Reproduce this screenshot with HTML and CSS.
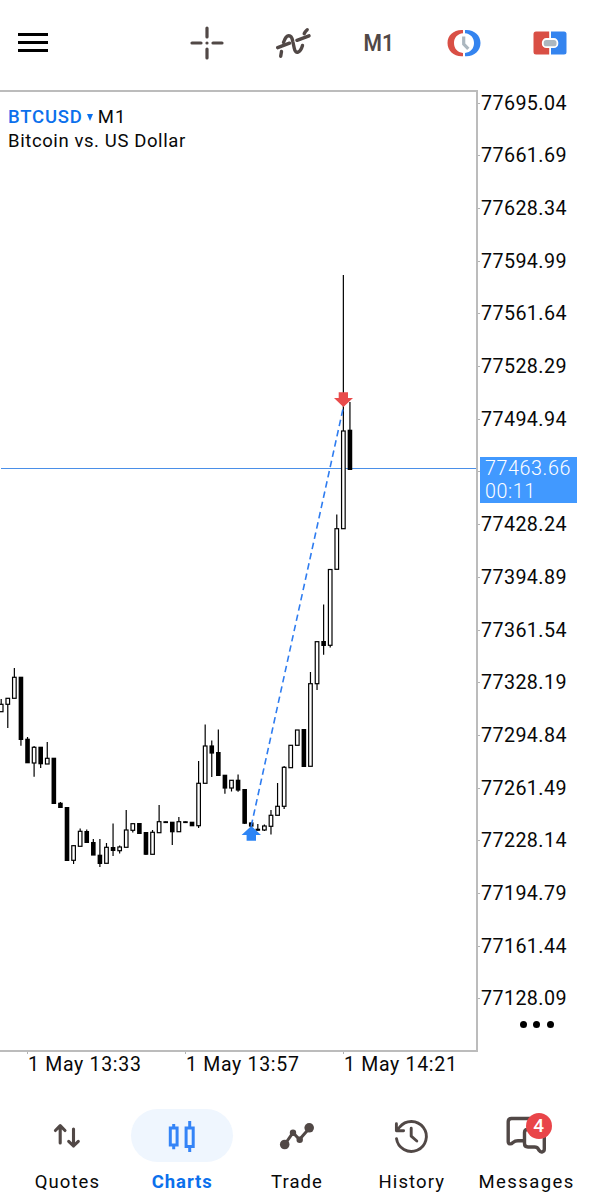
FILE: index.html
```html
<!DOCTYPE html>
<html lang="en">
<head>
    <meta charset="UTF-8">
    <meta name="viewport" content="width=device-width, initial-scale=1.0">
    <title>BTCUSD M1</title>
    <link rel="stylesheet" href="styles.css">
</head>
<body>

<header class="toolbar">
    <button class="menu" aria-label="Menu"><span></span><span></span><span></span></button>
    <div class="tools">
        <button aria-label="Crosshair">
            <svg width="36" height="36" viewBox="0 0 36 36" fill="none" stroke="#514846" stroke-width="3.2" stroke-linecap="round">
                <path d="M18 3v9M18 24v9M3 18h9M24 18h9"/>
                <circle cx="18" cy="18" r="1.6" fill="#514846" stroke="none"/>
            </svg>
        </button>
        <button aria-label="Indicators">
            <svg width="36" height="36" viewBox="0 0 36 36" fill="none" stroke="#514846" stroke-width="3.4" stroke-linecap="round">
                <path d="M5.7 31.2L6.5 26.5M8.5 17.5C11.5 8.5 16.5 9 17.8 16.5L19.2 23C20.5 30 25.3 28 27.5 20.5M29.2 8.8Q30.3 6.3 32.2 4.7"/>
                <path d="M2.7 22.7L14.5 18.2M22 15.3L34 10.8"/>
            </svg>
        </button>
        <button class="timeframe"><span>M1</span></button>
        <button aria-label="One click trading">
            <svg width="36" height="36" viewBox="0 0 36 36">
                <path d="M17 5H15.5C7.5 5 1.5 10.5 1.5 18S7.5 31.3 15.5 31.3H17V28C11.5 27.4 8 23.4 8 18S11.5 8.8 17 8.2Z" fill="#d94f45"/>
                <path d="M19 5H20.5C28.5 5 34.5 10.5 34.5 18S28.5 31.3 20.5 31.3H19V28C24.5 27.4 28 23.4 28 18S24.5 8.8 19 8.2Z" fill="#3484ef"/>
                <path d="M17.7 11.5V19L22.3 23.8" fill="none" stroke="#acb7bf" stroke-width="3.2"/>
            </svg>
        </button>
        <button aria-label="New order">
            <svg width="36" height="36" viewBox="0 0 36 36">
                <path d="M4 6.5H17.2V29.5H4Q1.5 29.5 1.5 27V9Q1.5 6.5 4 6.5Z" fill="#d94f45"/>
                <path d="M19 6.5H32Q34.5 6.5 34.5 9V27Q34.5 29.5 32 29.5H19Z" fill="#3484ef"/>
                <rect x="10.8" y="14" width="14.6" height="8.2" rx="3.5" fill="#acb7bf" stroke="#fff" stroke-width="1.8"/>
            </svg>
        </button>
    </div>
</header>

<main class="chart">
    <section class="plot">
        <svg id="candles" width="476" height="958" viewBox="0 92 476 958"></svg>
        <div class="title">
            <div><b>BTCUSD</b><i class="caret"></i><span class="period">M1</span></div>
            <div class="description">Bitcoin vs. US Dollar</div>
        </div>
    </section>
    <aside class="prices">
        <ul id="prices"></ul>
        <div class="current">77463.66<br>00:11</div>
        <div class="more"><span></span><span></span><span></span></div>
    </aside>
    <div class="times">
        <span>1 May 13:33</span>
        <span>1 May 13:57</span>
        <span>1 May 14:21</span>
    </div>
</main>

<nav class="tabs">
    <a class="tab">
        <span class="icon">
            <svg width="42" height="42" viewBox="0 0 42 42" fill="none" stroke="#514846" stroke-width="3.1" stroke-linecap="round" stroke-linejoin="round">
                <path d="M14.2 28V11M9.4 15.5L14.2 10.7L19 15.5M27.5 14V31M22.7 26.3L27.5 31L32.3 26.3"/>
            </svg>
        </span>
        <span class="label quotes">Quotes</span>
    </a>
    <a class="tab active">
        <span class="icon">
            <svg width="42" height="42" viewBox="0 0 42 42" fill="none" stroke="#3484f7" stroke-width="3">
                <path d="M12.7 9V12.5M12.7 30.5V34.2M28.7 6V12.5M28.7 32V37"/>
                <path d="M9.3 13H16.1V30H9.3ZM25.1 13H32.2V31.5H25.1Z"/>
            </svg>
        </span>
        <span class="label charts">Charts</span>
    </a>
    <a class="tab">
        <span class="icon">
            <svg width="42" height="42" viewBox="0 0 42 42" fill="#514846">
                <path d="M8.7 29.5L17 17.7L23.5 24.5L33.3 13.2" fill="none" stroke="#514846" stroke-width="3"/>
                <circle cx="8.7" cy="29.5" r="4.8"/>
                <circle cx="17" cy="17.7" r="3.2"/>
                <circle cx="23.7" cy="24.7" r="3.2"/>
                <circle cx="33.2" cy="12.8" r="4.8"/>
            </svg>
        </span>
        <span class="label trade">Trade</span>
    </a>
    <a class="tab">
        <span class="icon">
            <svg width="42" height="42" viewBox="0 0 42 42" fill="none" stroke="#514846" stroke-width="2.9" stroke-linecap="round" stroke-linejoin="round">
                <path d="M5.5 23.6A15 15 0 1 0 8.6 12.1L5.5 15.6M5.4 8.7V15.8H12.6"/>
                <path d="M20.2 13.2V21.2L25.8 26"/>
            </svg>
        </span>
        <span class="label history">History</span>
    </a>
    <a class="tab">
        <span class="icon">
            <svg width="42" height="42" viewBox="0 0 42 42" fill="none" stroke="#514846" stroke-width="3.4" stroke-linecap="round" stroke-linejoin="round">
                <path d="M24 3.5H5.5Q2.2 3.5 2.2 6.8V26.5C2.2 29.5 5 29.5 7 27.5Q9 25.7 12 25.7H17"/>
                <path d="M26 14.5H21.5Q18.5 14.5 18.5 17.5V28.5Q18.5 32 22 32H28.5C32 32 31.8 33.3 33 35.3C35 38.2 38.3 37 38.3 34V22"/>
            </svg>
            <span class="badge">4</span>
        </span>
        <span class="label messages">Messages</span>
    </a>
</nav>

<script>
// [high, body top, body bottom, low, 1 = rising / 0 = falling]
const candles = [
    [699, 704.3, 711.7, 712, 1], [698, 698.3, 704.3, 728, 1], [668, 677.3, 698.3, 698, 1],
    [677, 677, 739.7, 745.7, 0], [737, 739, 763, 763, 0], [746, 747.3, 763, 776.7, 1],
    [747, 747, 764, 768, 0], [742, 758.3, 764, 764, 1], [758, 758, 803.7, 804, 0],
    [802, 803, 807.7, 808, 0], [807, 807.3, 860.7, 861, 0], [845, 845.7, 860.3, 864, 1],
    [828.5, 831.3, 846.3, 846, 1], [829.5, 831.3, 842.7, 843, 0], [839, 842.3, 855.3, 855, 0],
    [839, 855, 863.7, 867, 0], [843, 847.3, 863.3, 863, 1], [823.5, 847.3, 850.7, 856, 0],
    [845.5, 847, 850.7, 853.5, 1], [810, 830, 847.3, 847, 1], [823.5, 823.7, 830.3, 832.5, 1],
    [823, 823.3, 833.7, 834, 0], [832, 832.3, 854.5, 855, 0], [830, 832.3, 854.3, 854, 1],
    [805, 821.7, 832.7, 833, 1], [821.5, 821.5, 822.8, 822.8, 0], [822, 822, 832, 845, 0],
    [817, 821.7, 831.7, 832, 1], [821.5, 821.5, 822.8, 822.8, 0], [822, 822, 826, 826, 0],
    [761, 783.3, 825.7, 828, 1], [724.5, 746, 783.3, 783, 1], [740.5, 745.7, 753.3, 777, 0],
    [729.5, 752.3, 775.7, 776, 0], [775, 775, 788.3, 793.7, 0], [780, 780.3, 788, 791.5, 1],
    [774.5, 780, 790.3, 791.7, 0], [789, 789.3, 823.5, 824, 0], [822.5, 822.7, 826.3, 827, 0],
    [824, 829, 830.5, 830.5, 0], [824.5, 826, 830, 831, 1], [810, 815.3, 826.3, 834.5, 1],
    [783, 806.3, 815.3, 815, 1], [766, 767.3, 806.3, 809, 1], [745, 745.3, 767.7, 768, 1],
    [730, 730, 745.3, 745, 1], [729, 729.3, 766.7, 767, 0], [672, 683.7, 766.3, 766, 1],
    [641.5, 641.7, 683.7, 690, 1], [604.5, 641.3, 645.7, 654.7, 0], [569, 569.5, 645.3, 647.5, 1],
    [514.5, 528.7, 569.3, 569, 1], [275, 431, 528.7, 529, 1], [402, 430, 469.7, 470, 0]
];

const STEP = 6.58;
let svg = '<path class="price-line" d="M1 468.5H476"/>';

candles.forEach(([high, top, bottom, low, up], i) => {
    const x = 1.2 + i * STEP;
    svg += `<path class="wick" d="M${x} ${high}V${low}"/>`;
    if (up) {
        svg += `<rect class="up" x="${x - 1.8}" y="${top}" width="3.6" height="${bottom - top}"/>`;
    } else {
        svg += `<rect x="${x - 2.3}" y="${top - 0.3}" width="4.6" height="${bottom - top + 0.6}"/>`;
    }
});

// Closed deal: buy arrow, sell arrow and the line that joins them
svg += '<path class="deal" d="M251.2 826L343.4 407"/>';
svg += '<path class="sell" d="M338.7 392.3H348V398H353L343.4 407L334 398H338.7Z"/>';
svg += '<path class="buy" d="M251.3 826L261 835H256V840.7H246.6V835H241.6Z"/>';
document.getElementById('candles').innerHTML = svg;

// Price scale, the row under the current price stays empty
let rows = '';
for (let i = 0; i < 18; i++) {
    const price = (77695.04 - i * 33.35).toFixed(2);
    rows += `<li>${i === 7 ? '' : price}</li>`;
}
document.getElementById('prices').innerHTML = rows;
</script>

</body>
</html>
```

FILE: styles.css
```css
* {
    box-sizing: border-box;
}
body {
    margin: 0;
    width: 592px;
    height: 1200px;
    display: flex;
    flex-direction: column;
    overflow: hidden;
    background: #fff;
    color: #080808;
    font-family: Roboto, "Liberation Sans", sans-serif;
}
button {
    border: none;
    background: none;
    padding: 0;
}
svg {
    display: block;
}

/* toolbar */
.toolbar {
    height: 90px;
    padding: 0 24.5px 5px 18px;
    display: flex;
    align-items: center;
    justify-content: space-between;
}
.menu {
    display: flex;
    flex-direction: column;
    gap: 5px;
}
.menu span {
    width: 30px;
    height: 3.3px;
    background: #000;
}
.tools {
    display: flex;
    gap: 49.6px;
}
.tools button {
    width: 36px;
    height: 36px;
}
.tools .timeframe {
    font: 600 24.5px/36px Roboto, sans-serif;
    color: #514846;
}
.timeframe span {
    display: inline-block;
    transform: scaleX(0.86);
}

/* chart */
.chart {
    display: grid;
    grid-template-columns: 478px 114px;
    grid-template-rows: 962px 48px;
}
.plot {
    position: relative;
    border: solid #bcbcbc;
    border-width: 2px 2px 2px 0;
}
.wick {
    stroke: #000;
    stroke-width: 1.2;
}
.up {
    fill: #fff;
    stroke: #000;
    stroke-width: 1.2;
}
.price-line {
    stroke: #4a8fe8;
    stroke-width: 1.2;
}
.deal {
    stroke: #2e7cf0;
    stroke-width: 1.6;
    stroke-dasharray: 6.5 4;
}
.sell {
    fill: #e94b4b;
}
.buy {
    fill: #2e85f5;
}
.title {
    position: absolute;
    top: 13px;
    left: 8px;
    font-size: 18.5px;
    line-height: 24px;
}
.title > div {
    display: flex;
    align-items: center;
}
.title b {
    color: #0b70ec;
    font-weight: 500;
    letter-spacing: 0.8px;
}
.caret {
    margin: 0 5px 0 4px;
    border: solid transparent;
    border-width: 7px 3.5px 0;
    border-top-color: #0b70ec;
}
.period {
    letter-spacing: 1.2px;
}
.description {
    letter-spacing: 0.6px;
}

.prices {
    position: relative;
    padding-top: 3px;
}
.prices ul {
    height: 916px;
    margin: 0;
    padding: 0;
    list-style: none;
    display: flex;
    flex-direction: column;
    justify-content: space-between;
}
.prices li {
    height: 20px;
    display: flex;
    align-items: center;
    font-size: 19.7px;
    letter-spacing: 0.4px;
}
.prices li::before {
    content: "";
    width: 2px;
    height: 1px;
    margin-right: 1px;
    background: #b3b3b3;
}
.current {
    position: absolute;
    top: 367px;
    left: 2px;
    width: 97px;
    height: 46px;
    padding-left: 5px;
    background: #4199ff;
    color: #fff;
    font-size: 19.7px;
    font-weight: 300;
    line-height: 23px;
    letter-spacing: 0.6px;
}
.more {
    display: flex;
    gap: 6.3px;
    margin: 12px 0 0 42px;
}
.more span {
    width: 7px;
    height: 7px;
    border-radius: 50%;
    background: #000;
}

.times {
    grid-column: 1 / -1;
    display: flex;
    padding-left: 27px;
}
.times span {
    width: 158px;
    padding-left: 1px;
    font-size: 19.5px;
    line-height: 26px;
    letter-spacing: 0.7px;
    white-space: nowrap;
}
.times span::before {
    content: "";
    display: block;
    width: 1px;
    height: 2px;
    margin: 0 0 -2px -1px;
    background: #b3b3b3;
}

/* bottom tabs */
.tabs {
    display: flex;
    padding: 9px 8px 0 10px;
}
.tab {
    flex: 1;
    display: flex;
    flex-direction: column;
    align-items: center;
}
.icon {
    position: relative;
    width: 102px;
    height: 53px;
    border-radius: 27px;
    display: flex;
    align-items: center;
    justify-content: center;
}
.active .icon {
    background: #eff6fe;
}
.label {
    margin-top: 8px;
    font-size: 18.5px;
    line-height: 24px;
    white-space: nowrap;
    letter-spacing: 1.1px;
}
.active .label {
    color: #0b70ec;
    font-weight: 700;
    letter-spacing: 0.9px;
}
.messages {
    letter-spacing: 1.4px;
}
.badge {
    position: absolute;
    top: 4px;
    left: 50px;
    width: 26px;
    height: 26px;
    border-radius: 50%;
    background: #e94549;
    color: #fff;
    font-size: 19px;
    font-weight: 500;
    line-height: 26px;
    text-align: center;
}
```
